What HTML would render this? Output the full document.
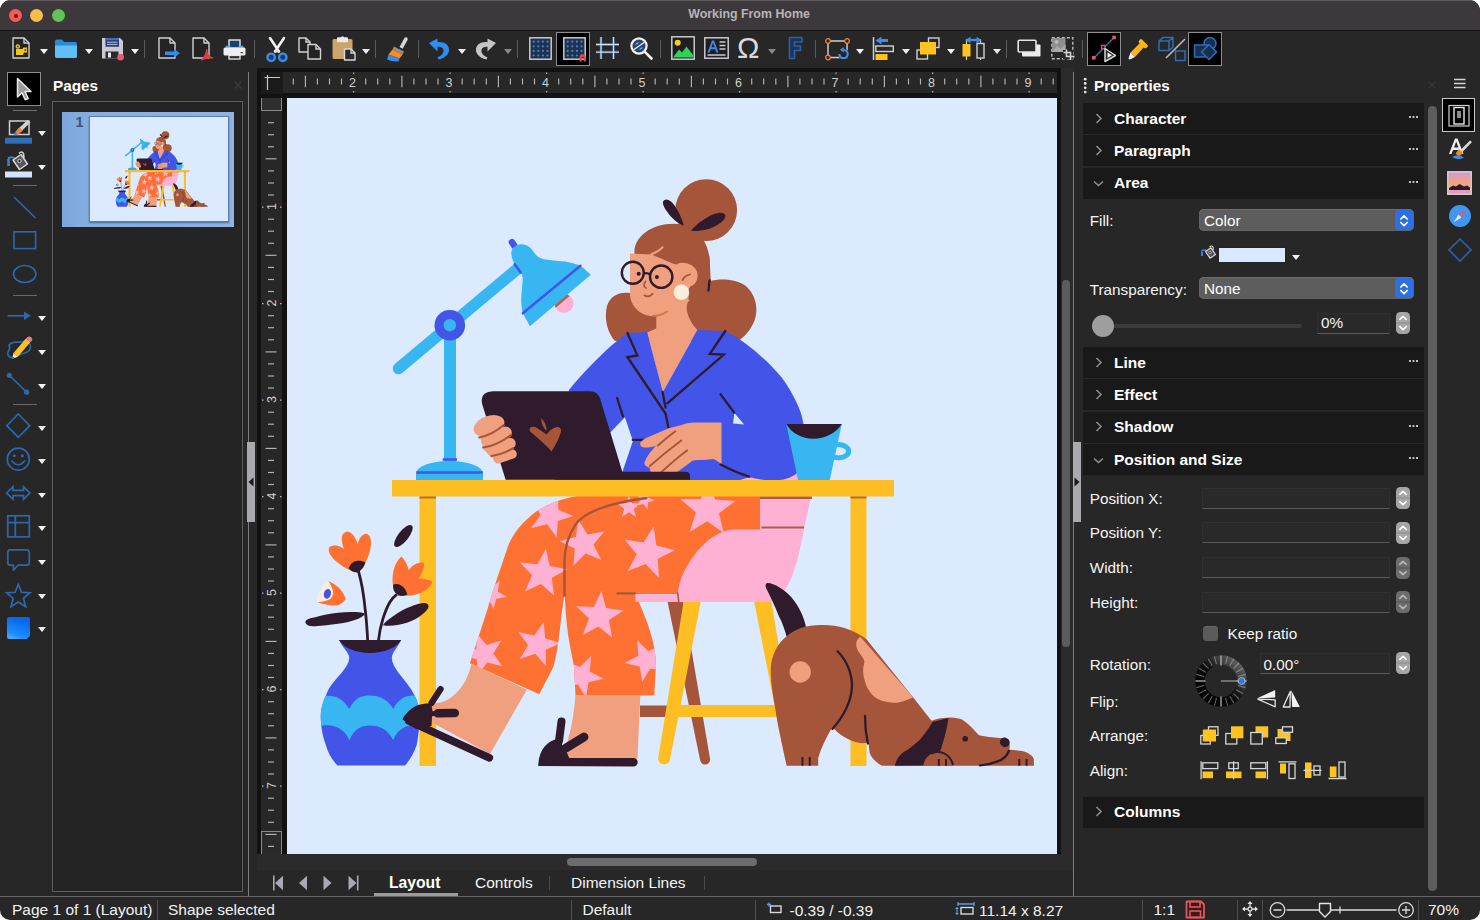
<!DOCTYPE html>
<html>
<head>
<meta charset="utf-8">
<title>Working From Home</title>
<style>
*{box-sizing:border-box;margin:0;padding:0}
html,body{width:1480px;height:920px;overflow:hidden;background:#fff;font-family:"Liberation Sans",sans-serif}
body{font-family:"Liberation Sans",sans-serif;color:#fff;position:relative}
.abs{position:absolute}
#win{position:absolute;left:0;top:0;width:1480px;height:920px;background:#272727;border-radius:11px 11px 10px 10px;overflow:hidden}
#titlebar{position:absolute;left:0;top:0;width:1480px;height:30.5px;background:#3d383b;border-bottom:1.5px solid #141114;box-shadow:0 1px 0 rgba(255,255,255,.17) inset}
#title{position:absolute;left:0;width:1498px;top:7px;text-align:center;font-weight:bold;font-size:12.4px;color:#b9b4b6}
.tl{position:absolute;top:9px;width:13px;height:13px;border-radius:50%}
.sep{position:absolute;width:1px;background:#5b5b5b}
.hsep{position:absolute;height:1px;background:#6a6a6a}
.dd{position:absolute;width:0;height:0;border-left:4px solid transparent;border-right:4px solid transparent;border-top:5px solid #f2f2f2}
.dd.dim{border-top-color:#8a8a8a}
.ic{position:absolute;overflow:visible}
.selbox{position:absolute;background:#000;border:1px solid #8d8d8d}
.lbl{position:absolute;font-size:15.3px;color:#f4f4f4;white-space:nowrap}
.hd{position:absolute;left:1083px;width:341px;height:31px;background:#191919}
.hd b{position:absolute;left:31px;top:6.5px;font-size:15.5px;color:#fff;white-space:nowrap}
.hd i{position:absolute;left:326px;top:13px;width:9px;height:3px;font-style:normal}
.hd i:before{content:"";position:absolute;left:0;top:0;width:2px;height:2px;background:#bdbdbd;box-shadow:3.5px 0 0 #bdbdbd,7px 0 0 #bdbdbd}
.chev{position:absolute;left:11px;top:10px;width:8px;height:10px}
.sel{position:absolute;left:1199px;width:215px;height:22px;border-radius:5px;background:#5d5d5d;box-shadow:0 0 0 .5px #6d6d6d inset,0 1px 0 rgba(255,255,255,.12) inset;font-size:15.3px;color:#fff;padding:3px 0 0 5px;overflow:hidden}
.sel:after{content:"";position:absolute;right:1px;top:1px;width:18px;height:20px;border-radius:4px;background:#2f6fe4}
.fld{position:absolute;height:21px;background:#292929;border:1px solid #303030;border-bottom-color:#5a5a5a}
.stp{position:absolute;left:1396px;width:14px;height:22px;border-radius:4px;background:#9a9a9a}
.stp.dim{background:#6e6e6e}
.st{position:absolute;top:901px;font-size:15.5px;color:#f2f2f2;white-space:nowrap}
</style>
</head>
<body>
<div id="win">

<!-- ===== TITLE BAR ===== -->
<div id="titlebar">
  <div class="tl" style="left:9px;background:#ee5f58"><div class="abs" style="left:4.5px;top:4.5px;width:4px;height:4px;border-radius:50%;background:#7a1410"></div></div>
  <div class="tl" style="left:30px;background:#f6be4f"></div>
  <div class="tl" style="left:52px;background:#5fc454"></div>
  <div id="title">Working From Home</div>
</div>

<!-- TOOLBAR -->
<div id="toolbar"><!--TB--><svg class="ic" style="left:12px;top:37px" width="18" height="22" viewBox="0 0 18 22" ><path d="M1 1H12L17 6V21H1Z" fill="#232323" stroke="#d2d2d2" stroke-width="1.4" stroke-linejoin="round"/><path d="M12 1V6H17" fill="none" stroke="#d2d2d2" stroke-width="1.4" stroke-linejoin="round"/><path d="M3.5 9.5a2.3 2.3 0 1 1 4.6 0a2.3 2.3 0 1 1-4.6 0zM4 12h6.5l1-1.5h3.5v5h-3l-1 2.5H4z" fill="#f2c71c"/><circle cx="5.8" cy="9.5" r="1" fill="#5a4a00"/><circle cx="13.3" cy="13" r="1" fill="#5a4a00"/></svg>
<div class="dd" style="left:39.6px;top:49px"></div>
<svg class="ic" style="left:54px;top:38px" width="24" height="21" viewBox="0 0 24 21" ><path d="M1 3.5Q1 1.5 3 1.5H8L10 4H21Q23 4 23 6V18Q23 20 21 20H3Q1 20 1 18Z" fill="#2b8bd3"/><path d="M1 7.5H23V18Q23 20 21 20H3Q1 20 1 18Z" fill="#62bef8"/></svg>
<div class="dd" style="left:85.2px;top:49px"></div>
<svg class="ic" style="left:101px;top:37px" width="23" height="23" viewBox="0 0 23 23" ><path d="M1 1H19L22 4V21.5H1Z" fill="#c9c9cf"/><rect x="4.5" y="1" width="13.5" height="8.7" fill="#1f3d7a"/><rect x="4.5" y="1" width="13.5" height="2.2" fill="#3e6fc0"/><path d="M6 5.2h10.5M6 7.4h10.5" stroke="#c9c9cf" stroke-width="1"/><rect x="4.5" y="14.5" width="13" height="7" fill="#2a2a2e"/><rect x="7" y="15.5" width="3" height="5" fill="#e8e8ea"/><circle cx="19.6" cy="20.3" r="3.3" fill="#f0577a"/></svg>
<div class="dd" style="left:130.8px;top:49px"></div>
<div class="sep" style="left:144px;top:40px;height:18px"></div>
<svg class="ic" style="left:158px;top:37px" width="24" height="23" viewBox="0 0 24 23" ><path d="M1 1H12L17 6V21H1Z" fill="#232323" stroke="#d2d2d2" stroke-width="1.4" stroke-linejoin="round"/><path d="M12 1V6H17" fill="none" stroke="#d2d2d2" stroke-width="1.4" stroke-linejoin="round"/><path d="M7 16.3H17.5" stroke="#2f8ff0" stroke-width="3.4"/><path d="M16 11.8L21.8 16.3L16 20.8Z" fill="#2f8ff0"/></svg>
<svg class="ic" style="left:192px;top:37px" width="24" height="24" viewBox="0 0 24 24" ><path d="M1 1H12L17 6V21H1Z" fill="#232323" stroke="#d2d2d2" stroke-width="1.4" stroke-linejoin="round"/><path d="M12 1V6H17" fill="none" stroke="#d2d2d2" stroke-width="1.4" stroke-linejoin="round"/><path d="M9.5 22.3c2.3-2 4-5.5 4.4-9.3c.150-1.4 1.5-1.4 1.5 0c.100 3.5 2 6.5 5.5 7.3c1 .25.7 1.3-.250 1.25c-3.5-.250-7.5.400-10.5 1.9c-.900.45-1.35-.500-.650-1.15z" fill="#d8413d"/></svg>
<svg class="ic" style="left:223px;top:39px" width="23" height="21" viewBox="0 0 23 21" ><rect x="6" y="1" width="11" height="8" fill="#1c3f6b" stroke="#e8e8ec" stroke-width="1.4"/><path d="M2.5 7.5Q2.5 6.2 4 6.8Q11.5 9.5 19 6.8Q20.5 6.2 20.5 7.5V9H2.5Z" fill="#4f97e0"/><rect x=".5" y="8.5" width="22" height="8" rx="1.5" fill="#eeeef2"/><rect x="6" y="16.5" width="11" height="3.5" fill="#2a2a2a" stroke="#e8e8ec" stroke-width="1.3"/><rect x="17.5" y="13" width="2.5" height="1.3" fill="#555"/></svg>
<div class="sep" style="left:254px;top:40px;height:18px"></div>
<svg class="ic" style="left:265px;top:36px" width="24" height="27" viewBox="0 0 24 27" ><path d="M5 2L14 15.5M19 2L10 15.5" stroke="#f4f4f4" stroke-width="2.6" stroke-linecap="round"/><rect x="10" y="13.5" width="4" height="3" fill="#e0e0e0"/><circle cx="6.2" cy="21.3" r="3.7" fill="#123a78" stroke="#3f8be0" stroke-width="2.4"/><circle cx="17.8" cy="21.3" r="3.7" fill="#123a78" stroke="#3f8be0" stroke-width="2.4"/></svg>
<svg class="ic" style="left:298px;top:37px" width="24" height="23" viewBox="0 0 24 23" ><path d="M1 1H8L12 5V15H1Z" fill="#232323" stroke="#d2d2d2" stroke-width="1.4" stroke-linejoin="round"/><path d="M8 1V5H12" fill="none" stroke="#d2d2d2" stroke-width="1.4"/><path d="M10 7.5H18L22.5 12V22H10Z" fill="#232323" stroke="#d2d2d2" stroke-width="1.4" stroke-linejoin="round"/><path d="M18 7.5V12H22.5" fill="none" stroke="#d2d2d2" stroke-width="1.4"/></svg>
<svg class="ic" style="left:332px;top:36px" width="24" height="25" viewBox="0 0 24 25" ><rect x=".5" y="3" width="20" height="20" rx="1.5" fill="#c9a46b"/><rect x="5" y="1.2" width="11" height="5" rx="1" fill="#efe9df"/><circle cx="10.5" cy="1.8" r="1.6" fill="#efe9df"/><path d="M12.5 13H19L23 17V24H12.5Z" fill="#2a2a2e" stroke="#d9d9d9" stroke-width="1.4" stroke-linejoin="round"/><path d="M19 13V17H23" fill="none" stroke="#d9d9d9" stroke-width="1.3"/></svg>
<div class="dd" style="left:361.7px;top:49px"></div>
<div class="sep" style="left:375px;top:40px;height:18px"></div>
<svg class="ic" style="left:385px;top:35px" width="24" height="27" viewBox="0 0 24 27" ><path d="M14.5 12L19.3 3.2Q20.3 1.5 22 2.5Q23.3 3.5 22.5 5L17.7 13.8Z" fill="#d5d5d8"/><path d="M9 11.5L19 16.5L17.5 19.5L7.5 14.5Z" fill="#8d8d92"/><path d="M7.5 14.5L17.5 19.5L14.5 23.5L3.5 19.5Z" fill="#ff8c1a"/><path d="M3.5 19.5L14.5 23.5L13.5 26.5Q7 27 2 24.5Z" fill="#3d87e6"/></svg>
<div class="sep" style="left:418px;top:40px;height:18px"></div>
<svg class="ic" style="left:428px;top:36px" width="23" height="25" viewBox="0 0 23 25" ><path d="M1 7L9.5 2.5V6.2C16 5.5 21.5 9 21 14.5C20.5 19 16 22.5 10.5 23.5L9.5 21.5C13.5 20 16 17 15.5 14C15 11.5 12.5 10.5 9.5 10.8V15.5Z" fill="#2f8ff0"/></svg>
<div class="dd" style="left:458px;top:49px"></div>
<svg class="ic" style="left:474px;top:36px" width="23" height="25" viewBox="0 0 23 25" ><path d="M22 7L13.5 2.5V6.2C7 5.5 1.5 9 2 14.5C2.5 19 7 22.5 12.5 23.5L13.5 21.5C9.5 20 7 17 7.5 14C8 11.5 10.5 10.5 13.5 10.8V15.5Z" fill="#c6c6c8"/></svg>
<div class="dd dim" style="left:503.6px;top:49px"></div>
<div class="sep" style="left:517px;top:40px;height:18px"></div>
<svg class="ic" style="left:529px;top:36.5px" width="24" height="25" viewBox="0 0 24 25" ><rect x=".8" y=".8" width="21.4" height="21.4" fill="#1e3350" stroke="#c9c9cf" stroke-width="1.5"/><circle cx="4.7" cy="4.7" r="1.1" fill="#4f7fc0"/><circle cx="4.7" cy="9.3" r="1.1" fill="#4f7fc0"/><circle cx="4.7" cy="13.9" r="1.1" fill="#4f7fc0"/><circle cx="4.7" cy="18.5" r="1.1" fill="#4f7fc0"/><circle cx="9.3" cy="4.7" r="1.1" fill="#4f7fc0"/><circle cx="9.3" cy="9.3" r="1.1" fill="#4f7fc0"/><circle cx="9.3" cy="13.9" r="1.1" fill="#4f7fc0"/><circle cx="9.3" cy="18.5" r="1.1" fill="#4f7fc0"/><circle cx="13.9" cy="4.7" r="1.1" fill="#4f7fc0"/><circle cx="13.9" cy="9.3" r="1.1" fill="#4f7fc0"/><circle cx="13.9" cy="13.9" r="1.1" fill="#4f7fc0"/><circle cx="13.9" cy="18.5" r="1.1" fill="#4f7fc0"/><circle cx="18.5" cy="4.7" r="1.1" fill="#4f7fc0"/><circle cx="18.5" cy="9.3" r="1.1" fill="#4f7fc0"/><circle cx="18.5" cy="13.9" r="1.1" fill="#4f7fc0"/><circle cx="18.5" cy="18.5" r="1.1" fill="#4f7fc0"/></svg>
<div class="selbox" style="left:556px;top:32px;width:34px;height:34px"></div>
<svg class="ic" style="left:562.5px;top:36.5px" width="24" height="25" viewBox="0 0 24 25" ><rect x=".8" y=".8" width="21.4" height="21.4" fill="#1e3350" stroke="#c9c9cf" stroke-width="1.5"/><circle cx="4.7" cy="4.7" r="1.1" fill="#4f7fc0"/><circle cx="4.7" cy="9.3" r="1.1" fill="#4f7fc0"/><circle cx="4.7" cy="13.9" r="1.1" fill="#4f7fc0"/><circle cx="4.7" cy="18.5" r="1.1" fill="#4f7fc0"/><circle cx="9.3" cy="4.7" r="1.1" fill="#4f7fc0"/><circle cx="9.3" cy="9.3" r="1.1" fill="#4f7fc0"/><circle cx="9.3" cy="13.9" r="1.1" fill="#4f7fc0"/><circle cx="9.3" cy="18.5" r="1.1" fill="#4f7fc0"/><circle cx="13.9" cy="4.7" r="1.1" fill="#4f7fc0"/><circle cx="13.9" cy="9.3" r="1.1" fill="#4f7fc0"/><circle cx="13.9" cy="13.9" r="1.1" fill="#4f7fc0"/><circle cx="13.9" cy="18.5" r="1.1" fill="#4f7fc0"/><circle cx="18.5" cy="4.7" r="1.1" fill="#4f7fc0"/><circle cx="18.5" cy="9.3" r="1.1" fill="#4f7fc0"/><circle cx="18.5" cy="13.9" r="1.1" fill="#4f7fc0"/><circle cx="18.5" cy="18.5" r="1.1" fill="#4f7fc0"/><path d="M16.5 24.5V20.5a3.2 3.2 0 0 1 6.4 0V24.5H20.7V20.7a1 1 0 0 0-2 0V24.5Z" fill="#e5484d"/></svg>
<svg class="ic" style="left:595px;top:36px" width="25" height="24" viewBox="0 0 25 24" ><path d="M6 1V23M18.5 1V23M1 8.5H24M1 16.2H24" stroke="#2b5d94" stroke-width="3.2" opacity=".55"/><path d="M6 1V23M18.5 1V23M1 8.5H24M1 16.2H24" stroke="#cfe0f2" stroke-width="1.3"/></svg>
<svg class="ic" style="left:629px;top:36px" width="25" height="25" viewBox="0 0 25 25" ><circle cx="10" cy="10" r="7.6" fill="#28466e" stroke="#f2f2f2" stroke-width="2.2"/><path d="M5 13.5L15 6.5" stroke="#dfe8f3" stroke-width="1.5"/><path d="M6.5 8.5l3-2M10.5 13.5l3-2" stroke="#7fa6d6" stroke-width="1.3"/><path d="M15.8 15.8L22.5 22.5" stroke="#f2f2f2" stroke-width="2.6" stroke-linecap="round"/></svg>
<div class="sep" style="left:660px;top:40px;height:18px"></div>
<svg class="ic" style="left:671px;top:36px" width="24" height="24" viewBox="0 0 24 24" ><rect x=".8" y=".8" width="22.4" height="22.4" fill="#1f1f1f" stroke="#c9c9cf" stroke-width="1.5"/><circle cx="6.7" cy="6.8" r="3" fill="#fdc92a"/><path d="M2 21.5L8 13.5L11 16.5L15.5 10.5L22 19V21.5Z" fill="#2fd158"/></svg>
<svg class="ic" style="left:704px;top:37px" width="25" height="22" viewBox="0 0 25 22" ><rect x=".8" y=".8" width="23.4" height="20.4" fill="#1f1f1f" stroke="#c9c9cf" stroke-width="1.5"/><path d="M3.5 15.5L8 3.5H10L14.5 15.5H12.3L11.2 12.3H6.8L5.7 15.5ZM7.5 10.3H10.5L9 5.8Z" fill="#3f8be8"/><path d="M15.5 5H21.5M15.5 8.5H21.5M15.5 12H21.5M3.5 18H21.5" stroke="#c9c9cf" stroke-width="1.3"/></svg>
<div class="abs" style="left:737px;top:30.5px;font-size:30px;line-height:34px;color:#dadada">&#937;</div>
<div class="dd dim" style="left:768px;top:49px"></div>
<svg class="ic" style="left:788px;top:36px" width="16" height="24" viewBox="0 0 16 24" ><path d="M1.5 1.5H14V6H6.5V10H12.5V14.5H6.5V22.5H1.5Z" fill="#1c3557" stroke="#2f62a3" stroke-width="1.6" stroke-linejoin="round"/></svg>
<div class="sep" style="left:815px;top:40px;height:18px"></div>
<svg class="ic" style="left:824px;top:37px" width="26" height="24" viewBox="0 0 26 24" ><rect x="4" y="4" width="19" height="16.5" fill="none" stroke="#cfcfcf" stroke-width="1.5"/><circle cx="4" cy="4" r="2.3" fill="#3a2418" stroke="#e8833a" stroke-width="1.3"/><circle cx="23" cy="4" r="2.3" fill="#3a2418" stroke="#e8833a" stroke-width="1.3"/><circle cx="4" cy="20.5" r="2.3" fill="#3a2418" stroke="#e8833a" stroke-width="1.3"/><circle cx="19.5" cy="17" r="5.5" fill="#262626"/><path d="M15.3 17a4.2 4.2 0 1 0 4.2-4.2" fill="none" stroke="#3f8be8" stroke-width="2.2"/><path d="M19.8 10L15.8 12.8L19.8 15.6Z" fill="#3f8be8"/></svg>
<div class="dd" style="left:856.2px;top:49px"></div>
<svg class="ic" style="left:872px;top:36px" width="23" height="25" viewBox="0 0 23 25" ><path d="M1.5 1V24" stroke="#d0d0d0" stroke-width="1.5"/><path d="M8 4.5H16" stroke="#3f8be8" stroke-width="3"/><path d="M9.5 .5L3.5 4.5L9.5 8.5Z" fill="#3f8be8"/><rect x="3.8" y="10" width="17.5" height="5.5" fill="#2a2a2a" stroke="#d0d0d0" stroke-width="1.4"/><rect x="3.5" y="18" width="12" height="6" fill="#fdc41f"/></svg>
<div class="dd" style="left:901.6px;top:49px"></div>
<svg class="ic" style="left:916px;top:37px" width="24" height="23" viewBox="0 0 24 23" ><rect x="12.5" y="1" width="10.5" height="9.5" fill="none" stroke="#d0d0d0" stroke-width="1.4"/><rect x="1" y="13" width="10.5" height="9" fill="none" stroke="#d0d0d0" stroke-width="1.4"/><rect x="4" y="5" width="16" height="12.5" fill="#fdc41f"/></svg>
<div class="dd" style="left:947px;top:49px"></div>
<svg class="ic" style="left:961px;top:36px" width="25" height="25" viewBox="0 0 25 25" ><path d="M5.5 3V24M19.5 3V24" stroke="#d0d0d0" stroke-width="1.2"/><path d="M8 4H17" stroke="#3f8be8" stroke-width="2.4"/><path d="M9.5 .8L4.5 4L9.5 7.2ZM15.5 .8L20.5 4L15.5 7.2Z" fill="#3f8be8"/><rect x="1.5" y="8" width="8" height="12.5" fill="#fdc41f"/><rect x="16" y="7.5" width="7" height="14.5" fill="#2a2a2a" stroke="#d0d0d0" stroke-width="1.4"/></svg>
<div class="dd" style="left:992.7px;top:49px"></div>
<div class="sep" style="left:1006px;top:40px;height:18px"></div>
<svg class="ic" style="left:1017px;top:39px" width="25" height="19" viewBox="0 0 25 19" ><rect x="5" y="5.5" width="18.5" height="12" rx="1" fill="#ececec"/><rect x="1.2" y="1.2" width="17.8" height="11.8" rx="1" fill="#2b2b2b" stroke="#e4e4e4" stroke-width="1.6"/></svg>
<svg class="ic" style="left:1051px;top:37px" width="24" height="24" viewBox="0 0 24 24" ><rect x=".8" y=".8" width="21" height="21" fill="none" stroke="#bdbdbd" stroke-width="1.4" stroke-dasharray="3 2"/><rect x="1" y="1" width="13.5" height="14" fill="#8e8e8e"/><circle cx="5.5" cy="5" r="2" fill="#b8b8b8"/><path d="M1 15L6 9L9.5 12L14.5 7.5V15Z" fill="#a9a9a9"/><rect x="12" y="13" width="10" height="9" fill="#262626"/><path d="M15.5 12.5V19.5H23.5M12.5 15.5H19.5V23" fill="none" stroke="#d6d6d6" stroke-width="1.6"/></svg>
<div class="sep" style="left:1082px;top:40px;height:18px"></div>
<div class="selbox" style="left:1087px;top:32px;width:34px;height:34px"></div>
<svg class="ic" style="left:1090px;top:34px" width="30" height="30" viewBox="0 0 30 30" ><path d="M4 24L24 3.5" stroke="#3a6fb0" stroke-width="1.4"/><rect x="2" y="22" width="3.6" height="3.6" fill="#e0566f"/><rect x="22.3" y="1.7" width="3.6" height="3.6" fill="#e0566f"/><rect x="11.5" y="11.3" width="3.4" height="3.4" fill="#2a1418" stroke="#e0566f" stroke-width="1.2"/><path d="M15 14.5V27.5L25.5 21.5Z" fill="#2b2b2b" stroke="#d8d8d8" stroke-width="1.5" stroke-linejoin="round"/><path d="M17.5 18.5V24L22 21.3Z" fill="#f4f4f4"/></svg>
<svg class="ic" style="left:1127px;top:38px" width="22" height="22" viewBox="0 0 22 22" ><path d="M13 1.5Q14 .5 15 1.5L20.5 7Q21.5 8 20.5 9L18.5 10.5L16.5 9.5L8 19L3.5 14.5L12.5 5.5L11.5 3.5Z" fill="#fdb515"/><path d="M3.5 14.5L8 19L4 21Q2 22 1.5 20.5Z" fill="#f0f0f0"/></svg>
<svg class="ic" style="left:1157px;top:35px" width="30" height="27" viewBox="0 0 30 27" ><path d="M2 6L6 2.5H16V12L12 15.5H2ZM2 6H12V15.5M12 6L16 2.5" fill="none" stroke="#2f6db8" stroke-width="1.5" stroke-linejoin="round"/><path d="M9 23L28 4" stroke="#bdbdbd" stroke-width="1.6"/><rect x="18.5" y="16" width="9.5" height="9.5" fill="none" stroke="#2f6db8" stroke-width="1.5"/></svg>
<div class="selbox" style="left:1188px;top:32px;width:34px;height:34px"></div>
<svg class="ic" style="left:1192px;top:35px" width="28" height="28" viewBox="0 0 28 28" ><circle cx="18" cy="8.5" r="6" fill="#17304f" stroke="#2f6db8" stroke-width="1.5"/><rect x="2.5" y="10" width="13" height="12" fill="#17304f" stroke="#2f6db8" stroke-width="1.5"/><path d="M17 9.5L24.5 17L17 24.5L9.5 17Z" fill="#17304f" stroke="#2f6db8" stroke-width="1.5"/></svg><!--/TB--></div>

<!-- LEFT TOOLBOX -->
<div id="toolbox"><!--TX--><div class="selbox" style="left:7px;top:72px;width:34px;height:34px"></div>
<svg class="ic" style="left:14px;top:77px" width="20" height="24" viewBox="0 0 20 24"><path d="M3.5 1.5L17 14.5H11L14.2 21.5L11.2 22.8L8 15.8L3.5 20Z" fill="#9a9a9a" stroke="#e9e9e9" stroke-width="1.5" stroke-linejoin="round"/></svg>
<div class="hsep" style="left:12.5px;top:109.5px;width:24.5px"></div>
<svg class="ic" style="left:5px;top:119px" width="28" height="26" viewBox="0 0 28 26"><rect x="4.5" y="2" width="19.5" height="13.5" fill="#262626" stroke="#cfcfcf" stroke-width="1.5"/><path d="M22.5 1L25.5 3.5L15 13.5L12 11Z" fill="#cfcfd4"/><path d="M14.5 8.5L18 11.5L13 15.5L10 13Z" fill="#e8873a"/><path d="M10 13L13 15.5L8.5 16.5Z" fill="#3f8be8"/><rect x="0" y="18.7" width="27" height="6" fill="#2f6db8"/></svg>
<div class="dd" style="left:37.5px;top:130.9px"></div>
<svg class="ic" style="left:5px;top:151px" width="28" height="28" viewBox="0 0 28 28"><path d="M3.5 8V15" stroke="#3f7fd0" stroke-width="2.6"/><path d="M3 7.5Q7 5 10 7.5" stroke="#3f7fd0" stroke-width="2.2" fill="none"/><path d="M8 9L16 3.5L22.5 13L14.5 18.5Z" fill="#56565c" stroke="#d4d4d8" stroke-width="1.5" stroke-linejoin="round"/><path d="M14 2.5Q16.5 -.5 18.5 2.5L19 7" fill="none" stroke="#d4d4d8" stroke-width="1.5"/><circle cx="14.5" cy="10" r="1.7" fill="#262626" stroke="#d4d4d8" stroke-width="1"/><rect x="0" y="20.5" width="27" height="6" fill="#d4e3fa"/></svg>
<div class="dd" style="left:37.5px;top:164.7px"></div>
<div class="hsep" style="left:12.5px;top:185px;width:24.5px"></div>
<svg class="ic" style="left:12px;top:195px" width="26" height="26" viewBox="0 0 26 26"><path d="M2 2L23.6 23" stroke="#2d67ae" stroke-width="1.6"/></svg>
<svg class="ic" style="left:12px;top:230px" width="26" height="21" viewBox="0 0 26 21"><rect x="2" y="1.8" width="21.6" height="16.8" fill="none" stroke="#2d67ae" stroke-width="1.6"/></svg>
<svg class="ic" style="left:12px;top:263px" width="26" height="22" viewBox="0 0 26 22"><ellipse cx="12.7" cy="11" rx="11.2" ry="8.5" fill="none" stroke="#2d67ae" stroke-width="1.6"/></svg>
<div class="hsep" style="left:12.5px;top:294.5px;width:24.5px"></div>
<svg class="ic" style="left:6px;top:308px" width="27" height="16" viewBox="0 0 27 16"><path d="M1.5 7.8H20" stroke="#2d67ae" stroke-width="1.7"/><path d="M18 3.5L25 7.8L18 12.1Z" fill="#2d67ae"/></svg>
<div class="dd" style="left:37.5px;top:316.4px"></div>
<svg class="ic" style="left:5px;top:336px" width="30" height="28" viewBox="0 0 30 28"><path d="M4 9C8 4 13 7 16 6C22 4 27 8 25 13C24 17 18 17 14 19C10 22 5 23 3 19C1 15 7 14 4 9Z" fill="none" stroke="#2d67ae" stroke-width="1.7"/><path d="M21 2.5L25.5 6L13 20.5L8.5 17Z" fill="#f8c425"/><path d="M21 2.5L23 .8Q24.5 0 25.8 1L26.8 2Q27.8 3.2 27 4.5L25.5 6Z" fill="#f07a8c"/><path d="M8.5 17L13 20.5L7 23Z" fill="#f1e5cf"/><path d="M7.8 20.8L9.4 22L7 23Z" fill="#333"/></svg>
<div class="dd" style="left:37.5px;top:349.9px"></div>
<svg class="ic" style="left:5px;top:371px" width="26" height="25" viewBox="0 0 26 25"><path d="M4.5 4.5L21.5 21" stroke="#2d67ae" stroke-width="1.7"/><circle cx="4.3" cy="4.3" r="2.6" fill="#2d67ae"/><circle cx="21.7" cy="21.2" r="2.6" fill="#2d67ae"/></svg>
<div class="dd" style="left:37.5px;top:383.8px"></div>
<div class="hsep" style="left:12.5px;top:404px;width:24.5px"></div>
<svg class="ic" style="left:5px;top:412px" width="27" height="27" viewBox="0 0 27 27"><path d="M13.3 2L24.8 13.7L13.3 25.3L1.8 13.7Z" fill="none" stroke="#2d67ae" stroke-width="1.7" stroke-linejoin="miter"/></svg>
<div class="dd" style="left:37.5px;top:425.7px"></div>
<svg class="ic" style="left:5px;top:446px" width="27" height="27" viewBox="0 0 27 27"><circle cx="13.3" cy="13.2" r="11" fill="none" stroke="#2d67ae" stroke-width="1.7"/><circle cx="9.3" cy="9.8" r="1.5" fill="#2d67ae"/><circle cx="17.3" cy="9.8" r="1.5" fill="#2d67ae"/><path d="M6.5 14.5Q13.3 23 20 14.5" fill="none" stroke="#2d67ae" stroke-width="1.7"/></svg>
<div class="dd" style="left:37.5px;top:459.3px"></div>
<svg class="ic" style="left:5px;top:484px" width="27" height="18" viewBox="0 0 27 18"><path d="M1.5 9L8 2.8V6.3H18.5V2.8L25 9L18.5 15.2V11.7H8V15.2Z" fill="none" stroke="#2d67ae" stroke-width="1.7" stroke-linejoin="miter"/></svg>
<div class="dd" style="left:37.5px;top:493.1px"></div>
<svg class="ic" style="left:6px;top:514px" width="26" height="25" viewBox="0 0 26 25"><rect x="1.8" y="1.8" width="21.5" height="21" fill="none" stroke="#2d67ae" stroke-width="1.7"/><path d="M9.3 1.8V22.8M1.8 8.6H23.3" stroke="#2d67ae" stroke-width="1.7"/></svg>
<div class="dd" style="left:37.5px;top:526.2px"></div>
<svg class="ic" style="left:6px;top:548px" width="26" height="25" viewBox="0 0 26 25"><path d="M4 1.8H20.5Q23.3 1.8 23.3 4.5V14.5Q23.3 17.2 20.5 17.2H12L7.5 22.2V17.2H4Q1.8 17.2 1.8 14.5V4.5Q1.8 1.8 4 1.8Z" fill="none" stroke="#2d67ae" stroke-width="1.7" stroke-linejoin="round"/></svg>
<div class="dd" style="left:37.5px;top:560.1px"></div>
<svg class="ic" style="left:5px;top:582px" width="27" height="27" viewBox="0 0 27 27"><path d="M13.3 2.2L16.5 10.3L25 10.8L18.4 16.3L20.6 24.7L13.3 20L6 24.7L8.2 16.3L1.6 10.8L10.1 10.3Z" fill="none" stroke="#2d67ae" stroke-width="1.7" stroke-linejoin="miter"/></svg>
<div class="dd" style="left:37.5px;top:593.5px"></div>
<div class="abs" style="left:7px;top:616.5px;width:23px;height:22.5px;border-radius:2.5px;background:linear-gradient(200deg,#0766ea 20%,#1f8dff 75%,#58b4ff 100%);clip-path:polygon(0 0,100% 0,100% 86%,86% 100%,0 100%)"></div>
<div class="dd" style="left:37.5px;top:627.1px"></div><!--/TX--></div>

<!-- PAGES PANEL -->
<div id="pages"><!--PG--><div class="abs" style="left:53px;top:77px;font-size:15.3px;font-weight:bold;color:#fff">Pages</div>
<svg class="ic" style="left:233px;top:80px" width="10" height="10"><path d="M1.5 1.5L8.5 8.5M8.5 1.5L1.5 8.5" stroke="#3c3c3c" stroke-width="1.3"/></svg>
<div class="abs" style="left:52px;top:101px;width:190.5px;height:791px;border:1px solid #5e5e5e;background:#242424"></div>
<div class="abs" style="left:62px;top:111.5px;width:171.5px;height:115.5px;background:linear-gradient(90deg,#7ca7dc 0,#86aee0 16%,#8db4e2 100%)"></div>
<div class="abs" style="left:89px;top:116px;width:140px;height:106px;background:#dbeafe;border:1px solid #607fa8;box-shadow:0 1px 1.5px rgba(40,60,90,.6)"></div>
<div class="abs" style="left:75.5px;top:114px;font-size:14.5px;font-weight:bold;color:#3d5676">1</div>
<svg class="abs" style="left:90px;top:117px" width="138" height="104" viewBox="90 117 138 104"><use href="#art" transform="translate(74.4,108.2) scale(.1288)"/></svg><!--/PG--></div>

<!-- WORKSPACE -->
<div id="work"><!--WK--><div class="abs" style="left:257px;top:68px;width:804px;height:786px;background:#121212"></div>
<div class="abs" style="left:283px;top:72px;width:774px;height:21px;background:#272727"></div>
<div class="abs" style="left:261px;top:72px;width:22px;height:22px;background:#1b1b1b"></div>
<svg class="ic" style="left:261px;top:72px" width="22" height="22"><path d="M3.5 5.5H19 M6.5 3V18" stroke="#c9c9c9" stroke-width="1.2" fill="none"/></svg>
<div class="abs" style="left:261px;top:98px;width:21px;height:756px;background:#272727"></div>
<div class="abs" style="left:261px;top:98px;width:21px;height:13px;border:1px solid #8a8a8a;border-top:none;background:#2f2f2f"></div>
<div class="abs" style="left:261px;top:831px;width:21px;height:23px;border:1px solid #8a8a8a;border-bottom:none;background:#2a2a2a"></div>
<svg class="abs" style="left:0;top:0" width="1480" height="920" shape-rendering="auto"><g stroke="#b4b4b4" stroke-width="1.15" stroke-linecap="butt"><path d="M293.3 78.5v6"/><path d="M305.4 75.8v11.5"/><path d="M317.4 78.5v6"/><path d="M329.5 78.5v6"/><path d="M341.5 78.5v6"/><path d="M353.6 72.5v1.5M353.6 91v1.5" stroke-width="1.2"/><path d="M365.7 78.5v6"/><path d="M377.7 78.5v6"/><path d="M389.8 78.5v6"/><path d="M401.9 75.8v11.5"/><path d="M413.9 78.5v6"/><path d="M426.0 78.5v6"/><path d="M438.0 78.5v6"/><path d="M450.1 72.5v1.5M450.1 91v1.5" stroke-width="1.2"/><path d="M462.2 78.5v6"/><path d="M474.2 78.5v6"/><path d="M486.3 78.5v6"/><path d="M498.4 75.8v11.5"/><path d="M510.4 78.5v6"/><path d="M522.5 78.5v6"/><path d="M534.5 78.5v6"/><path d="M546.6 72.5v1.5M546.6 91v1.5" stroke-width="1.2"/><path d="M558.7 78.5v6"/><path d="M570.7 78.5v6"/><path d="M582.8 78.5v6"/><path d="M594.9 75.8v11.5"/><path d="M606.9 78.5v6"/><path d="M619.0 78.5v6"/><path d="M631.0 78.5v6"/><path d="M643.1 72.5v1.5M643.1 91v1.5" stroke-width="1.2"/><path d="M655.2 78.5v6"/><path d="M667.2 78.5v6"/><path d="M679.3 78.5v6"/><path d="M691.4 75.8v11.5"/><path d="M703.4 78.5v6"/><path d="M715.5 78.5v6"/><path d="M727.5 78.5v6"/><path d="M739.6 72.5v1.5M739.6 91v1.5" stroke-width="1.2"/><path d="M751.7 78.5v6"/><path d="M763.7 78.5v6"/><path d="M775.8 78.5v6"/><path d="M787.9 75.8v11.5"/><path d="M799.9 78.5v6"/><path d="M812.0 78.5v6"/><path d="M824.0 78.5v6"/><path d="M836.1 72.5v1.5M836.1 91v1.5" stroke-width="1.2"/><path d="M848.2 78.5v6"/><path d="M860.2 78.5v6"/><path d="M872.3 78.5v6"/><path d="M884.4 75.8v11.5"/><path d="M896.4 78.5v6"/><path d="M908.5 78.5v6"/><path d="M920.5 78.5v6"/><path d="M932.6 72.5v1.5M932.6 91v1.5" stroke-width="1.2"/><path d="M944.7 78.5v6"/><path d="M956.7 78.5v6"/><path d="M968.8 78.5v6"/><path d="M980.9 75.8v11.5"/><path d="M992.9 78.5v6"/><path d="M1005.0 78.5v6"/><path d="M1017.0 78.5v6"/><path d="M1029.1 72.5v1.5M1029.1 91v1.5" stroke-width="1.2"/><path d="M1041.2 78.5v6"/><path d="M1053.2 78.5v6"/><path d="M268 122.7h6"/><path d="M268 134.7h6"/><path d="M268 146.8h6"/><path d="M265.5 158.8h11"/><path d="M268 170.9h6"/><path d="M268 183.0h6"/><path d="M268 195.0h6"/><path d="M262 207.1h1.5M280 207.1h1.5" stroke-width="1.2"/><path d="M268 219.2h6"/><path d="M268 231.2h6"/><path d="M268 243.3h6"/><path d="M265.5 255.3h11"/><path d="M268 267.4h6"/><path d="M268 279.5h6"/><path d="M268 291.5h6"/><path d="M262 303.6h1.5M280 303.6h1.5" stroke-width="1.2"/><path d="M268 315.7h6"/><path d="M268 327.7h6"/><path d="M268 339.8h6"/><path d="M265.5 351.9h11"/><path d="M268 363.9h6"/><path d="M268 376.0h6"/><path d="M268 388.0h6"/><path d="M262 400.1h1.5M280 400.1h1.5" stroke-width="1.2"/><path d="M268 412.2h6"/><path d="M268 424.2h6"/><path d="M268 436.3h6"/><path d="M265.5 448.4h11"/><path d="M268 460.4h6"/><path d="M268 472.5h6"/><path d="M268 484.5h6"/><path d="M262 496.6h1.5M280 496.6h1.5" stroke-width="1.2"/><path d="M268 508.7h6"/><path d="M268 520.7h6"/><path d="M268 532.8h6"/><path d="M265.5 544.9h11"/><path d="M268 556.9h6"/><path d="M268 569.0h6"/><path d="M268 581.0h6"/><path d="M262 593.1h1.5M280 593.1h1.5" stroke-width="1.2"/><path d="M268 605.2h6"/><path d="M268 617.2h6"/><path d="M268 629.3h6"/><path d="M265.5 641.4h11"/><path d="M268 653.4h6"/><path d="M268 665.5h6"/><path d="M268 677.5h6"/><path d="M262 689.6h1.5M280 689.6h1.5" stroke-width="1.2"/><path d="M268 701.7h6"/><path d="M268 713.7h6"/><path d="M268 725.8h6"/><path d="M265.5 737.9h11"/><path d="M268 749.9h6"/><path d="M268 762.0h6"/><path d="M268 774.0h6"/><path d="M262 786.1h1.5M280 786.1h1.5" stroke-width="1.2"/><path d="M268 798.2h6"/><path d="M268 810.2h6"/><path d="M268 822.3h6"/><path d="M265.5 834.4h11"/><path d="M268 846.4h6"/></g><g fill="#cfcfcf" font-family="Liberation Sans" font-size="12.5" text-anchor="middle"><text x="352.5" y="87">2</text><text x="449.0" y="87">3</text><text x="545.5" y="87">4</text><text x="642.0" y="87">5</text><text x="738.5" y="87">6</text><text x="835.0" y="87">7</text><text x="931.5" y="87">8</text><text x="1028.0" y="87">9</text><text transform="translate(276,206.5) rotate(-90)" x="0" y="0">1</text><text transform="translate(276,303.0) rotate(-90)" x="0" y="0">2</text><text transform="translate(276,399.5) rotate(-90)" x="0" y="0">3</text><text transform="translate(276,496.0) rotate(-90)" x="0" y="0">4</text><text transform="translate(276,592.5) rotate(-90)" x="0" y="0">5</text><text transform="translate(276,689.0) rotate(-90)" x="0" y="0">6</text><text transform="translate(276,785.5) rotate(-90)" x="0" y="0">7</text></g></svg>
<div id="canvas" class="abs" style="left:287px;top:98px;width:770px;height:756px;background:#dbeafe;overflow:hidden"><!--ART--><svg class="abs" style="left:0;top:0" width="770" height="756" viewBox="287 98 770 756">
<g id="art">
<rect x="419.5" y="496" width="16.5" height="270" fill="#fdbe24"/>
<rect x="850.5" y="496" width="16" height="270" fill="#fdbe24"/>
<rect x="419.5" y="496" width="16.5" height="2.5" fill="#b4702f"/>
<rect x="850.5" y="496" width="16" height="2.5" fill="#b4702f"/>
<path d="M367.7 641C367.2 631 366.5 621 365.4 611.3C364.6 603 363.6 595.5 362.4 588.5C361.3 582.5 360 577 358.6 571.7M378.4 641C379.3 633 380.8 625.5 382.9 618.9C384.8 612.8 387 607 389.8 602.2C391.8 599 394 596.5 396.6 594.6" stroke="#2f1b2b" stroke-width="2.8" fill="none" stroke-linecap="round"/>
<path d="M306.1 623.8C303.500 620.5 308 618.3 315.2 617.2C322.500 615.3 330 613.8 338 612.8C346 611.900 354 611.900 360.9 612.5C363 612.7 364.500 613.300 364.700 614.400C362.800 616.300 360.500 617.700 357.800 618.900C352 621.200 345 622.800 338 623.800C330 625 322.500 625.800 315.200 626.200C311 626.500 307.800 626 306.100 623.800Z" fill="#2f1b2b"/>
<path d="M382.9 625.2C385 622 388 619.500 391.300 617.400C396 614 401 611 406.500 608.300C411.500 606 416.500 604.200 421.700 603.300C425.200 602.800 427.800 603.300 428.300 605.300C428.800 606.800 428.200 608.300 427.100 609.800C424 613.500 420 616.500 415.700 618.900C410 621.800 404 623.700 397.400 625C392.500 625.800 387.500 626 382.900 625.200Z" fill="#2f1b2b"/>
<ellipse cx="403.4" cy="536" rx="13.5" ry="5.1" transform="rotate(-51.7 403.4 536)" fill="#2f1b2b"/>
<path d="M328.9 547.4C331.500 545.500 335 545.200 338 545.900C340.300 546.500 342.300 547.600 344.100 548.900C342.300 545 341.500 540.500 341.900 536.700C342.500 533.800 344.500 531.900 347.200 531.400C350 531.900 352 533.300 353.300 535.200C355.300 537.800 356.800 540.900 357.800 544.300C358.300 541.400 359.300 538.800 360.900 536.700C362.500 534.800 364.500 533.700 367 533.700C369.300 535 370.400 537.200 370.800 539.800C371.300 543.300 371 547 370 550.400C369 554.800 367.400 558.900 365.400 562.600C363.500 566.500 360.800 569.700 357.800 571.700C355 571.800 352.500 571.200 350.200 570.200C346.300 568.800 342.800 566.800 339.600 564.100C335.800 561.500 332.700 558.500 330.400 555C329 552.600 328.500 550 328.900 547.400Z" fill="#ff7133"/>
<path d="M348.700 567.900C350.300 564.300 353 561.800 356.300 561.100C359.500 560.500 362.700 561 365.400 562.600C364.500 566.500 362 570 357.800 572.500C354.500 572.600 350.500 571 348.700 567.900Z" fill="#2f1b2b"/>
<path d="M401.200 556.500C403.500 558.500 405.300 561.200 406.500 564.100C407.500 566 408.300 568 408.800 570.200C410.500 567.600 412.800 565.500 415.700 564.100C418 563 420.600 562.500 423.300 562.600C424.300 564.500 424.300 566.600 423.300 568.700C422.300 572.300 420.700 575.700 418.700 578.600C421.200 578.300 423.800 578.600 426.300 579.400C428.600 579.800 430.700 580.500 432.400 581.600C431.700 584.300 430 586.600 427.800 588.500C424.400 591.400 420.200 593.400 415.700 594.600C412.700 595.500 409.600 595.900 406.500 595.800L398 596C395 593 393.300 588.700 392.800 583.900C392.300 579.300 392.600 574.600 393.600 570.200C394.800 565.300 397.500 560 401.200 556.500Z" fill="#ff7133"/>
<path d="M393.100 584.700C395.700 583.600 398.500 584 401.200 585.400C404.500 587.400 406.600 590.700 407.300 594.600C404.500 596.200 401.500 596.300 398.900 595.300C397 594.500 395.500 593.200 394.400 591.500C393.300 589.500 392.900 587.200 393.100 584.700Z" fill="#2f1b2b"/>
<path d="M328.200 580.900C325.500 582.500 323.800 584.700 322.800 587C320.500 590.800 318.200 594.800 316.700 599.100C316.700 600.300 317 601.300 317.500 602.200L332 603L334 590Z" fill="#fbeedd"/>
<path d="M328.200 580.900C332.500 582.500 336.400 585.200 339.600 588.500C342.500 591.600 344.700 595.200 345.700 599.100C344 602 341.200 604 338 605.200C334 605.800 329.800 605.400 325.900 604.500C322.800 604 320 603.300 317.500 602.200C322 602 326.800 601 330.400 599.100C333 596.500 333.600 593.200 332.700 590C331.800 586.700 330.200 583.600 328.200 580.900Z" fill="#ff7133"/>
<ellipse cx="327.4" cy="593.8" rx="3.500" ry="5" transform="rotate(15 327.4 593.8)" fill="#4355e9"/>
<clipPath id="vc"><path d="M339 640L401.2 640C398 647 392 652 391.8 658C392 668 404 678 410.9 689C417 699 420 707 419.7 715C419.5 726 418.5 736 416.7 745C414 753 410 760 405 765.5L337.5 765.5C332 760 328 753 325.8 745C322.5 736 320.5 726 320.8 715C321 707 324 699 328.7 689C335 678 349 668 349.3 658C349 652 342 647 339 640Z"/></clipPath>
<path d="M339 640L401.2 640C398 647 392 652 391.8 658C392 668 404 678 410.9 689C417 699 420 707 419.7 715C419.5 726 418.5 736 416.7 745C414 753 410 760 405 765.5L337.5 765.5C332 760 328 753 325.8 745C322.5 736 320.5 726 320.8 715C321 707 324 699 328.7 689C335 678 349 668 349.3 658C349 652 342 647 339 640Z" fill="#4355e9"/>
<g clip-path="url(#vc)"><path d="M316 700C322 694 340 692 349.3 709C355 697 362 695.4 369.8 695.4C378 695.4 387 698 393.3 709C400 694 416 692 424 700L424 728C418 724 400 722 393.3 740.2C387 728 378 725.6 369.8 725.6C362 725.6 355 728 349.3 740.2C342 722 322 724 316 728Z" fill="#37b6f1"/></g>
<path d="M339 640L401.2 640C396 648 384 653 369.8 653C356 653 344 648 339 640Z" fill="#2f1b2b"/>
<path d="M666.8 598L682.6 598L710 758.5A5 5 0 0 1 700.2 760.5Z" fill="#a5563a"/>
<rect x="640" y="705.5" width="40" height="11.5" fill="#a5563a"/>
<path d="M735 465H818L804 529.4H735Z" fill="#ffb1d3"/>
<path d="M758 497.6H812" stroke="#b05c40" stroke-width="2.8"/><path d="M761.5 527.5H804" stroke="#a5563a" stroke-width="2" opacity=".9"/>
<circle cx="706.2" cy="210.1" r="30.9" fill="#a5563a"/>
<path d="M634.5 254C633 238 650 223.8 674 223.8C694 223.8 706 237 709.3 256C710.6 266 710 274 709.3 281C720 278.5 737 278 747 287C757 297 759 312 753 324C749 332 744 337 738 341L615 341C607 332 604 318 607 306C610 296 619 291.5 630 293Z" fill="#a5563a"/>
<path d="M664.2 200.2C667.5 198.2 672 201.5 675.3 206.5C679 212.5 682 219 684 225.8C677.5 223.5 671.5 218 667 211.5C663.5 206.5 661.5 202 664.2 200.2Z" fill="#2f1b2b"/>
<path d="M691 230.5C697 223.5 706 217.5 713.5 214.3C719 212 724.5 212 725.3 215.3C726 218.5 721.5 223 715 226.3C707.5 230 698.5 232 691 230.5Z" fill="#2f1b2b"/>
<path d="M630 253.5L651.4 254.5L674 264L690 266L690 300C684 304 686 318 697.4 330L662.9 392L647 332.5L656.3 328.5L656.3 316L653 316C641 316.5 630.5 306 630 295Z" fill="#f0a07f"/>
<circle cx="686.7" cy="274.7" r="10.8" fill="#f0a07f"/>
<path d="M683 279.5C684.5 276.5 687.5 274.5 690 274" stroke="#a5563a" stroke-width="1.8" fill="none" stroke-linecap="round"/>
<path d="M674 264L678.5 263C690 262 697.5 268 697.5 276C697.5 283 693 287 689 288L688.5 300L712 300L709.3 256L690 240Z" fill="#a5563a"/>
<path d="M678 263.5C686 261 697.5 266 697.5 275.5C697.5 282 693.5 286 689.5 286.5C684 286.5 679 283 677 277Z" fill="#f0a07f"/>
<path d="M682.5 280C684 277 687 275 690 274.3" stroke="#a5563a" stroke-width="1.8" fill="none" stroke-linecap="round"/>
<path d="M653 316C658.5 316 663.5 314 667 311.5" stroke="#c9764f" stroke-width="2" fill="none" stroke-linecap="round"/>
<path d="M651.4 254.3C656 252.5 660 250 662.5 247.3" stroke="#f0a07f" stroke-width="2" fill="none" stroke-linecap="round"/>
<path d="M709.5 280.5L708.5 290.5" stroke="#2f1b2b" stroke-width="2.3" stroke-linecap="round"/>
<circle cx="681.4" cy="292.3" r="7.8" fill="#fbeedd"/>
<circle cx="632.8" cy="272.8" r="11" fill="none" stroke="#2f1b2b" stroke-width="2.4"/>
<circle cx="661.2" cy="276.7" r="11.2" fill="none" stroke="#2f1b2b" stroke-width="2.4"/>
<path d="M643.8 273.6C646 272.6 648 273 650 274.5" stroke="#2f1b2b" stroke-width="2.2" fill="none"/>
<circle cx="638.7" cy="273.7" r="2" fill="#2f1b2b"/><circle cx="656.9" cy="277.1" r="2" fill="#2f1b2b"/>
<path d="M645.5 281.5C643.5 284 643.5 287 646 288" stroke="#a5563a" stroke-width="1.7" fill="none" stroke-linecap="round"/>
<path d="M644.5 295.3C647 297.2 650.5 296.5 652.5 293.8" stroke="#a5563a" stroke-width="1.9" fill="none" stroke-linecap="round"/>
<path d="M627.4 333C610 345 586 369 569 390L555 480L740 480L749.5 477.3C757 479 765 480.5 773 480.5C783 480.5 792 478 797.5 472.5C802 462 805 451 804.8 439C804.5 424 801.5 413 797.7 405C791.5 391 784 379 775 370C760 354 742 339 725.3 331L697.4 330L662.9 392L647 332Z" fill="#4355e9"/>
<path d="M624.9 417.3L632.9 441L622.5 471.8L612 471.8L606 437.1Z" fill="#dbeafe"/>
<path d="M734.4 412.9L744.1 424.4L733 423.5Z" fill="#dbeafe"/>
<path d="M627.4 333L637.4 355.5L627.4 357L665.5 413.5L668.3 427M662.6 392L665.5 407.5M725.3 331L709.7 354L723.9 354.6L667.3 403.3M720.5 394.3L734.2 412.6M617.1 398L623 416.5M632.8 439.9H644" stroke="#2f1b2b" stroke-width="2.3" fill="none" stroke-linejoin="miter" stroke-linecap="round"/>
<path d="M721.5 422.6L694.7 422.6C689 422.8 685 423.8 681.7 424.9C676 426 671 427.5 667 429L648.5 436.9C644 439 640.5 441 640.2 443.3C640 445.5 641 446.8 643 447.3C647 448 652 447 655.9 445.7C651 451 647 456 644.8 461.4C644 463.5 644.5 465.3 646.2 466C647.3 467 648.6 467.6 649.9 467.8C649.5 469 650 471.5 652.2 473.4C654 474.8 656 475.2 657.7 474.8C659 475.5 660 475.6 661.4 475.2C663 476.5 665 476.6 667 476.1C670 475.6 672.5 474.6 674.3 473.4C677 472 679.5 470.5 681.7 468.8L692.8 460.4C696 460 700 460.2 703.9 460C707 459.8 710 459 713.2 459C715 459.5 716.5 460.3 717.8 461.4L721.5 464.1Z" fill="#f0a07f"/>
<path d="M675.3 431.3C669 436 663 441 657.7 445.7M681.3 440.6C670 449 659 458 649.9 466M687.3 450.3C677 458 668 466 660.5 472.9" stroke="#a5563a" stroke-width="1.9" fill="none" stroke-linecap="round"/>
<path d="M720.5 464.6C730 469.5 740 474 749.2 476.6" stroke="#2f1b2b" stroke-width="2.3" fill="none" stroke-linecap="round"/>
<clipPath id="pc"><path d="M577 496C555 500 540 508 531.4 515.2C520 525 512 535 507.8 546.7C500 570 493 590 487.3 609.8L469.9 663.3L539.3 694.2C546 681 551 672 553.5 666.5C558 650 560 630 561.3 616L564.5 594L566 616C568 640 572 655 574 666.5L575.5 695.5L654.3 695.5L655.9 666.5C656 655 654 645 651.2 635C647 620 641 607 635.4 594L760 594L760 496Z"/></clipPath>
<path d="M577 496C555 500 540 508 531.4 515.2C520 525 512 535 507.8 546.7C500 570 493 590 487.3 609.8L469.9 663.3L539.3 694.2C546 681 551 672 553.5 666.5C558 650 560 630 561.3 616L564.5 594L566 616C568 640 572 655 574 666.5L575.5 695.5L654.3 695.5L655.9 666.5C656 655 654 645 651.2 635C647 620 641 607 635.4 594L760 594L760 496Z" fill="#ff7133"/>
<g clip-path="url(#pc)"><path d="M558.2 493.6L558.3 509.8L573.3 516.0L557.9 521.1L556.6 537.3L547.0 524.3L531.2 528.1L540.6 514.9L532.2 501.0L547.6 505.9ZM545.9 548.7L549.7 565.9L567.0 569.2L551.8 578.1L554.1 595.6L540.9 583.9L525.0 591.5L532.1 575.3L519.9 562.5L537.5 564.2ZM578.4 520.1L587.5 534.4L604.2 531.6L593.4 544.7L601.2 559.7L585.5 553.5L573.6 565.5L574.7 548.6L559.5 541.1L575.9 536.9ZM653.6 526.6L656.4 545.4L674.9 550.2L657.8 558.7L659.0 577.7L645.6 564.1L627.9 571.1L636.7 554.2L624.6 539.5L643.4 542.6ZM601.4 591.1L606.1 608.1L623.6 610.4L608.9 620.1L612.1 637.4L598.3 626.5L582.8 634.9L589.0 618.4L576.2 606.2L593.8 607.0ZM543.7 622.2L545.2 638.3L560.7 643.2L545.8 649.7L545.9 665.9L535.2 653.7L519.8 658.9L528.1 644.9L518.4 631.9L534.2 635.4ZM476.6 633.2L486.6 645.0L501.4 640.4L493.3 653.6L502.3 666.2L487.3 662.6L478.0 675.0L476.8 659.6L462.1 654.7L476.4 648.7ZM499.5 581.0L497.8 591.4L506.7 597.1L496.2 598.7L493.6 608.9L488.9 599.5L478.3 600.1L485.8 592.7L482.0 582.9L491.3 587.7ZM591.1 656.1L589.9 671.5L603.6 678.7L588.6 682.3L586.0 697.6L577.9 684.4L562.6 686.7L572.6 674.9L565.7 661.0L580.0 666.9ZM637.1 640.3L648.2 651.1L662.5 645.2L655.6 659.1L665.6 670.9L650.3 668.6L642.2 681.8L639.6 666.5L624.6 662.9L638.3 655.7ZM629.0 495.3L632.0 503.2L640.4 503.6L633.8 508.9L636.1 517.0L629.0 512.3L621.9 517.0L624.2 508.9L617.6 503.6L626.0 503.2ZM708.6 480.0L715.1 499.4L735.5 501.0L719.0 513.2L723.8 533.0L707.2 521.2L689.7 531.9L695.9 512.4L680.3 499.1L700.8 498.9ZM648.2 490.6L648.3 497.7L654.8 500.3L648.1 502.6L647.6 509.6L643.4 503.9L636.5 505.6L640.6 499.9L636.9 493.8L643.6 496.0ZM738.5 540.3L741.0 554.2L754.8 557.2L742.4 563.9L743.8 578.0L733.5 568.3L720.6 573.9L726.7 561.2L717.3 550.6L731.3 552.5Z" fill="#ffb1d3"/></g>
<path d="M646.4 498C610 503 584 512 575.5 524.7C567 537 564.5 550 564.5 562.5L564.5 595.6" stroke="#a5563a" stroke-width="2.4" fill="none" stroke-linecap="round"/>
<path d="M616.5 593.4H636" stroke="#a5563a" stroke-width="2.2"/>
<rect x="635.4" y="594.3" width="43" height="7.7" fill="#ffb1d3"/>
<rect x="671.5" y="705" width="106" height="12" fill="#fdbe24"/>
<path d="M684.2 598L701.5 598L670 759.5A5.9 5.9 0 0 1 658.3 757.5Z" fill="#fdbe24"/>
<path d="M753.5 598L770.9 598L797 758A5.9 5.9 0 0 1 785.3 760Z" fill="#fdbe24"/>
<path d="M734.6 529.4L804 529.4C801 545 798 559 794.5 569C791 580 787 588 782 594C778 599 773 602 766 602L677.2 602C677.5 590 680 578 686 568C694 553 712 530 734.6 529.4Z" fill="#ffb1d3"/>
<path d="M677.6 592.5L678.8 602" stroke="#a5563a" stroke-width="1.6"/>
<path d="M471.5 663.5C468 680 458 697 441.4 702.3L431 704L431 722L490 754L526.8 689.8Z" fill="#f0a07f"/>
<path d="M575.5 695L640.3 695L637.5 758.5L560 758.5C568 745 573 725 575.5 695Z" fill="#f0a07f"/>
<path d="M402.5 719.6C404.5 714.5 410.5 708.5 417.5 705.3C422 703.6 427 703.2 431.4 703.5L432.4 710.6L431.5 726L416 729Z" fill="#2f1b2b"/>
<path d="M409 721L489.2 757.8" stroke="#2f1b2b" stroke-width="7.8" stroke-linecap="round"/>
<path d="M431.5 703L440.6 689" stroke="#2f1b2b" stroke-width="6.2" stroke-linecap="round"/>
<path d="M431.8 713.8L438 713.3" stroke="#2f1b2b" stroke-width="5" stroke-linecap="round"/>
<path d="M438 713.3L454.7 713" stroke="#2f1b2b" stroke-width="8.6" stroke-linecap="round"/>
<path d="M538.3 766C538.3 750 548 740 558 739C563 745 567 752 569.2 758L633.5 758A4.2 4.2 0 0 1 633.5 766.4Z" fill="#2f1b2b"/>
<path d="M559 741L561.5 721.5" stroke="#2f1b2b" stroke-width="8" stroke-linecap="round"/>
<path d="M566 748L584 737" stroke="#2f1b2b" stroke-width="9" stroke-linecap="round"/>
<path d="M767.7 583C774 583 785 590 791.4 597.2C799 606 804 617 806 627L787 638C785 630 782 622 778.8 616.1C775 606 770 596 766 588C765 585 766 583 767.7 583Z" fill="#2f1b2b"/>
<path d="M786.6 636.6C795 628 809 624.5 823 625C838 625 853 629 866.5 639.2L912.9 697.1L931.5 720.8C937 718.5 943 717.5 948 717.7C953 717 958 718 962.5 719.8C969 724 974 730 979 735.3C986 737 993 737.5 999.7 738C1004 738 1008 740 1009 742.5C1010 745 1010 748 1009 749.7C1014 750 1019 750.5 1023.4 751.2C1029 753 1033 756 1033.8 759L1034 765.8L882 765.8C875 762 871 757 869.6 752.8L868.5 742.5C864 743.5 860 743.5 857.2 742.5C848 740 839 735 832.4 727C826 738 821 748 818.2 758L818.2 765.8L786.6 765.8C783 748 778 728 775.6 710.8C773 695 770 680 770.9 666.6C772 654 778 643 786.6 636.6Z" fill="#a5563a"/>
<path d="M860.5 637C856.5 638.5 855.5 643.5 857 648.5C858.5 653 863.5 656.5 864.5 662C862.5 668 862.8 674 864.4 679.5C867 690 872.5 697 880 700C886 702.5 893 703.3 898.5 702.5C904 701.5 909 699.5 913.2 697.3Z" fill="#f0a07f"/>
<circle cx="800.2" cy="672" r="10.7" fill="#f0a07f"/>
<path d="M932.6 721.9L948.5 718.1C947 729 944 740 940.8 749.7C936 757 930 762 923.3 765.5L894.8 765.8C896 760 899 756 902.6 752.8C909 749 914 745 919.1 740.4C924 735 929 728 932.6 721.9Z" fill="#2f1b2b"/>
<path d="M923.3 765.8C924 758 931 751.8 939.8 751.8C947 752 953 758 953.2 765.8Z" fill="#a5563a"/>
<path d="M931.5 753.5C939 750 950 753 953 765" stroke="#2f1b2b" stroke-width="2" fill="none"/>
<path d="M938.8 759V765.8M946 759V765.8M1019.3 759V765.8M1026.5 759V765.8M802.4 757V765.8M809.7 757V765.8" stroke="#2f1b2b" stroke-width="2"/>
<circle cx="965.2" cy="738.8" r="2.8" fill="#2f1b2b"/>
<ellipse cx="1004.8" cy="742.3" rx="5" ry="4.6" transform="rotate(25 1004.8 742.3)" fill="#2f1b2b"/>
<path d="M1009 750.8C1007 756 1002 760 997.6 761.3C992 763.5 986 765 980 765.4" stroke="#2f1b2b" stroke-width="2.4" fill="none" stroke-linecap="round"/>
<path d="M837.6 651.2C846 660 852 672 852 686.7C851 704 842 718 832.4 729M865 716C865 726 866 735 867.9 743.5" stroke="#2f1b2b" stroke-width="2.3" fill="none" stroke-linecap="round"/>
<rect x="392" y="480" width="502" height="16.5" fill="#fdbe24"/>
<path d="M398.5 368.5L518.5 268" stroke="#37b6f1" stroke-width="11.5" stroke-linecap="round"/>
<rect x="444" y="325" width="12" height="137" fill="#37b6f1"/>
<circle cx="449.8" cy="325.2" r="15.3" fill="#4355e9"/><circle cx="449.8" cy="325.2" r="6.2" fill="#37b6f1"/>
<path d="M442.7 459.5H457" stroke="#4355e9" stroke-width="2.5"/>
<path d="M416 480V474C416 466 432 461 449.5 461C467 461 483 466 483 474V480Z" fill="#37b6f1"/>
<path d="M416.3 472.4H482.7" stroke="#4355e9" stroke-width="2.5"/>
<path d="M512 242.200L514.500 246" stroke="#4355e9" stroke-width="6.600" stroke-linecap="round"/>
<clipPath id="bc"><circle cx="564.1" cy="303.5" r="9.5"/></clipPath><circle cx="564.1" cy="303.5" r="9.5" fill="#ffb1d3"/><path d="M529.9 326.3L590.8 274.7" stroke="#b4644a" stroke-width="5.2" clip-path="url(#bc)"/>
<path d="M511.4 254.6C510.5 249 515 244.5 521.7 244.2C526 244.2 529.5 246.5 531.5 249.1C534 252.5 535.5 255 538 256.7C540.5 258.3 543 259 545.7 259.5C552 260.5 558.5 261 565.2 261.6C570.5 262.5 575.5 263.8 580.4 265.4L590.8 274.7L529.9 326.3L522.8 313.3C521.8 309 521.3 304.5 521.2 300.2C521.2 293 522.5 285.5 522.8 278.5C522.6 276 521.8 273.8 520.7 272L514.1 263.3C512.5 260.5 511.8 257.5 511.4 254.6Z" fill="#37b6f1"/>
<path d="M522.8 313.3L580.4 265.8M514.7 264.3L520.7 272.5" stroke="#4355e9" stroke-width="2.5" stroke-linecap="round"/>
<path d="M493 391.3L590 391.3Q597.5 391.3 600 398.3L622.3 471.8L685.500 471.8Q690 471.8 690 475.800L690 479.8L505.600 479.8L482.600 405.500Q478.500 391.800 493 391.3Z" fill="#2f1b2b"/>
<path d="M529.6 429C530 426.5 534 426 537 428L546.7 434.5C549 431 553 427.5 557 427C560 426.8 561.5 429 560.9 432C559 439 555 446 551.5 451.5C549 448 540 440 532 433C530 431.5 529.3 430.2 529.6 429Z" fill="#a5563a"/>
<path d="M541.3 418.3C544 420.500 546.3 425.500 546.7 430.500C543.700 429 541 423.500 541.3 418.3Z" fill="#a5563a"/>
<path d="M476 424L500 420L514 456L497 462L484 450Z" fill="#f0a07f"/>
<ellipse cx="489" cy="425.8" rx="16" ry="9.8" transform="rotate(-20 489 425.8)" fill="#f0a07f"/>
<path d="M487.5 440.8L505.5 432.8" stroke="#f0a07f" stroke-width="12.6" stroke-linecap="round"/>
<path d="M492.5 450.6L510 443.6" stroke="#f0a07f" stroke-width="11.4" stroke-linecap="round"/>
<path d="M498 458.6L512 454" stroke="#f0a07f" stroke-width="9.6" stroke-linecap="round"/>
<path d="M479.2 437.4C488 436 497 431 503.7 425.1M483.1 447.6C493 446 503 441 511 434.9M491.4 456C499 455 507 452 513 448.1" stroke="#a5563a" stroke-width="2" fill="none" stroke-linecap="round"/>
<ellipse cx="838.5" cy="451.2" rx="10.2" ry="6.6" fill="none" stroke="#37b6f1" stroke-width="5"/>
<path d="M786.3 423.9L841.8 423.9L829.8 480L798 480Z" fill="#37b6f1"/>
<path d="M786.3 423.9L841.8 423.9C836 433 825 438.7 813.3 438.7C802 438.7 791.5 433 786.3 423.9Z" fill="#2f1b2b"/>
</g>
</svg><!--/ART--></div>
<div class="abs" style="left:257px;top:854px;width:804px;height:16px;background:#2b2b2b"></div>
<div class="abs" style="left:567px;top:858px;width:190px;height:8px;border-radius:4px;background:#6c6c6c"></div>
<div class="abs" style="left:1061px;top:68px;width:12px;height:802px;background:#2b2b2b"></div>
<div class="abs" style="left:1062px;top:280px;width:8px;height:367px;border-radius:4px;background:#5c5c5c"></div>
<div class="abs" style="left:248px;top:72px;width:1px;height:824px;background:#7c7c7c"></div>
<div class="abs" style="left:1073px;top:72px;width:1px;height:824px;background:#7c7c7c"></div>
<div class="abs" style="left:247px;top:442px;width:8px;height:80px;background:#aaaaae"></div>
<svg class="ic" style="left:247px;top:476px" width="8" height="12"><path d="M6.5 1.5v9L1.5 6z" fill="#1a1a1a"/></svg>
<div class="abs" style="left:1073px;top:442px;width:8px;height:80px;background:#aaaaae"></div>
<svg class="ic" style="left:1073px;top:476px" width="8" height="12"><path d="M1.5 1.5v9L6.5 6z" fill="#1a1a1a"/></svg>
<svg class="ic" style="left:270px;top:874px" width="92" height="18"><g fill="#a9a7b2"><path d="M3 1.5h1.6v15H3zM13 1.8v14.4L5 9z"/><path d="M37 1.8v14.4L29 9z"/><path d="M53.5 1.8v14.4l8-7.2z"/><path d="M78.5 1.8v14.4l8-7.2zM86.9 1.5h1.6v15h-1.6z"/></g></svg>
<div class="abs" style="left:389px;top:874px;font-size:15.7px;font-weight:bold;color:#fff">Layout</div>
<div class="abs" style="left:374px;top:893px;width:84px;height:3px;background:#9b9b9b"></div>
<div class="abs" style="left:475px;top:874px;font-size:15.5px;color:#f4f4f4">Controls</div>
<div class="sep" style="left:549px;top:876px;height:14px;background:#4a4a4a"></div>
<div class="abs" style="left:571px;top:874px;font-size:15.5px;color:#f4f4f4">Dimension Lines</div>
<div class="sep" style="left:704px;top:876px;height:14px;background:#4a4a4a"></div><!--/WK--></div>

<!-- PROPERTIES -->
<div id="props"><!--PR--><svg class="ic" style="left:1083px;top:77px" width="5" height="18"><g fill="#e2e2e2"><circle cx="2.2" cy="2.2" r="1.4"/><circle cx="2.2" cy="6.5" r="1.4"/><circle cx="2.2" cy="10.8" r="1.4"/><circle cx="2.2" cy="15.1" r="1.4"/></g></svg>
<div class="abs" style="left:1094px;top:77px;font-size:15.3px;font-weight:bold;color:#fff">Properties</div>
<svg class="ic" style="left:1427px;top:80px" width="10" height="10"><path d="M1.5 1.5L8.5 8.5M8.5 1.5L1.5 8.5" stroke="#343434" stroke-width="1.3"/></svg>
<svg class="ic" style="left:1454px;top:78px" width="12" height="11"><path d="M0 1.5H11.5M0 5.5H11.5M0 9.5H11.5" stroke="#d6d6d6" stroke-width="1.4"/></svg>
<div class="hd" style="top:103px"><svg class="ic" style="left:11px;top:9.5px" width="11" height="11"><path d="M2.5 1L7 5.5L2.5 10" fill="none" stroke="#8d8d8d" stroke-width="1.6"/></svg><b>Character</b><i></i></div>
<div class="hd" style="top:135.4px"><svg class="ic" style="left:11px;top:9.5px" width="11" height="11"><path d="M2.5 1L7 5.5L2.5 10" fill="none" stroke="#8d8d8d" stroke-width="1.6"/></svg><b>Paragraph</b><i></i></div>
<div class="hd" style="top:167.8px"><svg class="ic" style="left:9.5px;top:11.5px" width="11" height="11"><path d="M1 2.5L5.5 6.5L10 2.5" fill="none" stroke="#8d8d8d" stroke-width="1.6"/></svg><b>Area</b><i></i></div>
<div class="hd" style="top:347px"><svg class="ic" style="left:11px;top:9.5px" width="11" height="11"><path d="M2.5 1L7 5.5L2.5 10" fill="none" stroke="#8d8d8d" stroke-width="1.6"/></svg><b>Line</b><i></i></div>
<div class="hd" style="top:379.3px"><svg class="ic" style="left:11px;top:9.5px" width="11" height="11"><path d="M2.5 1L7 5.5L2.5 10" fill="none" stroke="#8d8d8d" stroke-width="1.6"/></svg><b>Effect</b></div>
<div class="hd" style="top:411.7px"><svg class="ic" style="left:11px;top:9.5px" width="11" height="11"><path d="M2.5 1L7 5.5L2.5 10" fill="none" stroke="#8d8d8d" stroke-width="1.6"/></svg><b>Shadow</b><i></i></div>
<div class="hd" style="top:444.2px"><svg class="ic" style="left:9.5px;top:11.5px" width="11" height="11"><path d="M1 2.5L5.5 6.5L10 2.5" fill="none" stroke="#8d8d8d" stroke-width="1.6"/></svg><b>Position and Size</b><i></i></div>
<div class="hd" style="top:796.8px"><svg class="ic" style="left:11px;top:9.5px" width="11" height="11"><path d="M2.5 1L7 5.5L2.5 10" fill="none" stroke="#8d8d8d" stroke-width="1.6"/></svg><b>Columns</b></div>
<div class="lbl" style="left:1089.7px;top:212px">Fill:</div>
<div class="lbl" style="left:1089.7px;top:281px">Transparency:</div>
<div class="lbl" style="left:1089.7px;top:489.5px">Position X:</div>
<div class="lbl" style="left:1089.7px;top:524px">Position Y:</div>
<div class="lbl" style="left:1089.7px;top:559px">Width:</div>
<div class="lbl" style="left:1089.7px;top:593.5px">Height:</div>
<div class="lbl" style="left:1227.5px;top:625px">Keep ratio</div>
<div class="lbl" style="left:1089.7px;top:656px">Rotation:</div>
<div class="lbl" style="left:1089.7px;top:692.5px">Flip:</div>
<div class="lbl" style="left:1089.7px;top:727px">Arrange:</div>
<div class="lbl" style="left:1089.7px;top:762px">Align:</div>
<div class="sel" style="top:209px">Color</div>
<svg class="ic" style="left:1399px;top:212.5px" width="10" height="15" viewBox="0 0 10 15"><path d="M1.8 6L5 2.8L8.2 6M1.8 9.5L5 12.7L8.2 9.5" fill="none" stroke="#fff" stroke-width="1.7" stroke-linecap="round" stroke-linejoin="round"/></svg>
<div class="sel" style="top:277px">None</div>
<svg class="ic" style="left:1399px;top:280.5px" width="10" height="15" viewBox="0 0 10 15"><path d="M1.8 6L5 2.8L8.2 6M1.8 9.5L5 12.7L8.2 9.5" fill="none" stroke="#fff" stroke-width="1.7" stroke-linecap="round" stroke-linejoin="round"/></svg>
<svg class="ic" style="left:1200px;top:245px" width="17" height="17" viewBox="0 0 17 17"><path d="M2 6.5V11" stroke="#3f7fd0" stroke-width="2"/><path d="M1.5 6Q4.5 4 7 6" stroke="#3f7fd0" stroke-width="1.7" fill="none"/><path d="M5.5 6.5L11 2.8L15.5 9.5L10 13.2Z" fill="#55555b" stroke="#d4d4d8" stroke-width="1.2" stroke-linejoin="round"/><path d="M9.5 2Q11.5 0 13 2L13.3 5" fill="none" stroke="#d4d4d8" stroke-width="1.1"/><circle cx="10" cy="7.5" r="1.2" fill="#262626" stroke="#d4d4d8" stroke-width=".8"/></svg>
<div class="abs" style="left:1218.5px;top:248px;width:66px;height:13.5px;background:#d9e8fd;box-shadow:0 0 0 1px #1d2530"></div>
<div class="dd" style="left:1292px;top:255px"></div>
<div class="abs" style="left:1104px;top:323.5px;width:198px;height:4px;border-radius:2px;background:#3c3c3c"></div>
<div class="abs" style="left:1091.5px;top:314.5px;width:22px;height:22px;border-radius:50%;background:#9e9e9e"></div>
<div class="fld" style="left:1317px;top:312.5px;width:73px;height:21px"></div>
<div class="lbl" style="left:1321px;top:314px">0%</div>
<svg class="ic" style="left:1395.5px;top:312px" width="14" height="22" viewBox="0 0 14 22"><rect x="0" y="0" width="14" height="22" rx="4.5" fill="#a6a6a6"/><path d="M.500 11H13.5" stroke="#8a8a8a" stroke-width="1"/><path d="M3.8 7.3L7 4.3L10.2 7.3M3.8 14.7L7 17.7L10.2 14.7" fill="none" stroke="#ffffff" stroke-width="1.6" stroke-linecap="round" stroke-linejoin="round"/></svg>
<div class="fld" style="left:1202px;top:487.5px;width:188px;height:21px"></div>
<svg class="ic" style="left:1395.5px;top:486.5px" width="14" height="22" viewBox="0 0 14 22"><rect x="0" y="0" width="14" height="22" rx="4.5" fill="#a6a6a6"/><path d="M.500 11H13.5" stroke="#8a8a8a" stroke-width="1"/><path d="M3.8 7.3L7 4.3L10.2 7.3M3.8 14.7L7 17.7L10.2 14.7" fill="none" stroke="#ffffff" stroke-width="1.6" stroke-linecap="round" stroke-linejoin="round"/></svg>
<div class="fld" style="left:1202px;top:522px;width:188px;height:21px"></div>
<svg class="ic" style="left:1395.5px;top:521.5px" width="14" height="22" viewBox="0 0 14 22"><rect x="0" y="0" width="14" height="22" rx="4.5" fill="#a6a6a6"/><path d="M.500 11H13.5" stroke="#8a8a8a" stroke-width="1"/><path d="M3.8 7.3L7 4.3L10.2 7.3M3.8 14.7L7 17.7L10.2 14.7" fill="none" stroke="#ffffff" stroke-width="1.6" stroke-linecap="round" stroke-linejoin="round"/></svg>
<div class="fld" style="left:1202px;top:557px;width:188px;height:21px"></div>
<svg class="ic" style="left:1395.5px;top:556.5px" width="14" height="22" viewBox="0 0 14 22"><rect x="0" y="0" width="14" height="22" rx="4.5" fill="#6c6c6c"/><path d="M.500 11H13.5" stroke="#555" stroke-width="1"/><path d="M3.8 7.3L7 4.3L10.2 7.3M3.8 14.7L7 17.7L10.2 14.7" fill="none" stroke="#b9b9b9" stroke-width="1.6" stroke-linecap="round" stroke-linejoin="round"/></svg>
<div class="fld" style="left:1202px;top:591.5px;width:188px;height:21px"></div>
<svg class="ic" style="left:1395.5px;top:591px" width="14" height="22" viewBox="0 0 14 22"><rect x="0" y="0" width="14" height="22" rx="4.5" fill="#6c6c6c"/><path d="M.500 11H13.5" stroke="#555" stroke-width="1"/><path d="M3.8 7.3L7 4.3L10.2 7.3M3.8 14.7L7 17.7L10.2 14.7" fill="none" stroke="#b9b9b9" stroke-width="1.6" stroke-linecap="round" stroke-linejoin="round"/></svg>
<div class="abs" style="left:1202.5px;top:625.5px;width:15px;height:15px;border-radius:3.5px;background:#5b5b5b;box-shadow:0 .5px 0 rgba(255,255,255,.15) inset"></div>
<div class="fld" style="left:1260px;top:652.5px;width:130px;height:21px"></div>
<div class="lbl" style="left:1263.5px;top:655.5px">0&#46;00&#176;</div>
<svg class="ic" style="left:1395.5px;top:652px" width="14" height="22" viewBox="0 0 14 22"><rect x="0" y="0" width="14" height="22" rx="4.5" fill="#a6a6a6"/><path d="M.500 11H13.5" stroke="#8a8a8a" stroke-width="1"/><path d="M3.8 7.3L7 4.3L10.2 7.3M3.8 14.7L7 17.7L10.2 14.7" fill="none" stroke="#ffffff" stroke-width="1.6" stroke-linecap="round" stroke-linejoin="round"/></svg>
<svg class="ic" style="left:1195px;top:655px" width="52" height="52" viewBox="0 0 52 52"><defs><linearGradient id="dg" x1="0" y1="1" x2="1" y2="0"><stop offset="0" stop-color="#000"/><stop offset=".5" stop-color="#0c0c0c"/><stop offset=".72" stop-color="#3c3c3c"/><stop offset="1" stop-color="#6a6a6a"/></linearGradient></defs><circle cx="26" cy="26" r="21" fill="none" stroke="url(#dg)" stroke-width="9.5"/><path d="M41.5 26L51.5 26" stroke="#bdbdbd" stroke-width="1.3" opacity="0.95"/><path d="M42.9 21.5L50.6 19.4" stroke="#bdbdbd" stroke-width="1.1" opacity="0.5"/><path d="M41.2 17.2L48.1 13.3" stroke="#bdbdbd" stroke-width="1.1" opacity="0.5"/><path d="M38.4 13.6L44 8" stroke="#bdbdbd" stroke-width="1.1" opacity="0.5"/><path d="M34.8 10.8L38.8 3.9" stroke="#bdbdbd" stroke-width="1.1" opacity="0.5"/><path d="M30.5 9.1L32.6 1.4" stroke="#bdbdbd" stroke-width="1.1" opacity="0.5"/><path d="M26 10.5L26 0.5" stroke="#bdbdbd" stroke-width="1.3" opacity="0.95"/><path d="M21.5 9.1L19.4 1.4" stroke="#bdbdbd" stroke-width="1.1" opacity="0.5"/><path d="M17.3 10.8L13.3 3.9" stroke="#bdbdbd" stroke-width="1.1" opacity="0.5"/><path d="M13.6 13.6L8 8" stroke="#bdbdbd" stroke-width="1.1" opacity="0.5"/><path d="M10.8 17.2L3.9 13.3" stroke="#bdbdbd" stroke-width="1.1" opacity="0.5"/><path d="M9.1 21.5L1.4 19.4" stroke="#bdbdbd" stroke-width="1.1" opacity="0.5"/><path d="M10.5 26L0.5 26" stroke="#bdbdbd" stroke-width="1.3" opacity="0.95"/><path d="M9.1 30.5L1.4 32.6" stroke="#bdbdbd" stroke-width="1.1" opacity="0.5"/><path d="M10.8 34.8L3.9 38.8" stroke="#bdbdbd" stroke-width="1.1" opacity="0.5"/><path d="M13.6 38.4L8 44" stroke="#bdbdbd" stroke-width="1.1" opacity="0.5"/><path d="M17.2 41.2L13.2 48.1" stroke="#bdbdbd" stroke-width="1.1" opacity="0.5"/><path d="M21.5 42.9L19.4 50.6" stroke="#bdbdbd" stroke-width="1.1" opacity="0.5"/><path d="M26 41.5L26 51.5" stroke="#bdbdbd" stroke-width="1.3" opacity="0.95"/><path d="M30.5 42.9L32.6 50.6" stroke="#bdbdbd" stroke-width="1.1" opacity="0.5"/><path d="M34.8 41.2L38.8 48.1" stroke="#bdbdbd" stroke-width="1.1" opacity="0.5"/><path d="M38.4 38.4L44 44" stroke="#bdbdbd" stroke-width="1.1" opacity="0.5"/><path d="M41.2 34.8L48.1 38.8" stroke="#bdbdbd" stroke-width="1.1" opacity="0.5"/><path d="M42.9 30.5L50.6 32.6" stroke="#bdbdbd" stroke-width="1.1" opacity="0.5"/><path d="M26 26H44" stroke="#9a9a9a" stroke-width="1.3"/><circle cx="46.6" cy="26" r="3.4" fill="#3a78c2" stroke="#8fb6e6" stroke-width="1"/></svg>
<svg class="ic" style="left:1256px;top:689px" width="21" height="19" viewBox="0 0 21 19"><path d="M1.2 9.3L19.2 1V8.6Z" fill="#f2f2f2"/><path d="M1.8 10.2L19.2 10.8V17.8Z" fill="none" stroke="#e6e6e6" stroke-width="1.3" stroke-linejoin="round"/></svg>
<svg class="ic" style="left:1282px;top:688.5px" width="19" height="19" viewBox="0 0 19 19"><path d="M9.3 1.2L17.8 18H10.2Z" fill="#f2f2f2"/><path d="M8.3 2.5L8 18H1.2Z" fill="none" stroke="#e6e6e6" stroke-width="1.3" stroke-linejoin="round"/></svg>
<svg class="ic" style="left:1199.5px;top:725.5px" width="19" height="19" viewBox="0 0 19 19"><rect x="8.5" y=".8" width="9.5" height="8.5" fill="none" stroke="#d6d6d6" stroke-width="1.3"/><rect x=".8" y="9.5" width="9.5" height="8.5" fill="none" stroke="#d6d6d6" stroke-width="1.3"/><rect x="2.8" y="3.5" width="13.2" height="12" fill="#fdc41f"/></svg>
<svg class="ic" style="left:1224.5px;top:725.5px" width="19" height="19" viewBox="0 0 19 19"><rect x=".8" y="7.5" width="11" height="10.5" fill="none" stroke="#d6d6d6" stroke-width="1.3"/><rect x="6" y=".3" width="12.4" height="12" fill="#fdc41f"/></svg>
<svg class="ic" style="left:1249.5px;top:725.5px" width="19" height="19" viewBox="0 0 19 19"><rect x="5.5" y=".3" width="12.7" height="11.2" fill="#fdc41f"/><rect x=".8" y="6.5" width="11.5" height="11.5" fill="#2a2a2a" stroke="#d6d6d6" stroke-width="1.3"/></svg>
<svg class="ic" style="left:1275px;top:725.5px" width="19" height="19" viewBox="0 0 19 19"><rect x="2.5" y="3" width="13" height="12" fill="#fdc41f"/><rect x="7.5" y=".8" width="10" height="5.5" fill="#2a2a2a" stroke="#d6d6d6" stroke-width="1.3"/><rect x=".8" y="11.8" width="10.5" height="5.7" fill="#2a2a2a" stroke="#d6d6d6" stroke-width="1.3"/></svg>
<svg class="ic" style="left:1199.5px;top:760.5px" width="19" height="19" viewBox="0 0 19 19"><path d="M1.1 .3V18.3" stroke="#d6d6d6" stroke-width="1.3"/><rect x="2.8" y="1.8" width="15" height="5.8" fill="none" stroke="#d6d6d6" stroke-width="1.3"/><rect x="2.5" y="10.5" width="10.5" height="6.7" fill="#fdc41f"/></svg>
<svg class="ic" style="left:1225px;top:760.5px" width="19" height="19" viewBox="0 0 19 19"><rect x="3.8" y="1.8" width="9.5" height="5.8" fill="none" stroke="#d6d6d6" stroke-width="1.3"/><rect x="1" y="10.5" width="15.5" height="6.7" fill="#fdc41f"/><path d="M8.6 .3V18.3" stroke="#d6d6d6" stroke-width="1.3"/></svg>
<svg class="ic" style="left:1249.5px;top:760.5px" width="19" height="19" viewBox="0 0 19 19"><path d="M17.4 .3V18.3" stroke="#d6d6d6" stroke-width="1.3"/><rect x=".8" y="1.8" width="15" height="5.8" fill="none" stroke="#d6d6d6" stroke-width="1.3"/><rect x="5.5" y="10.5" width="10.5" height="6.7" fill="#fdc41f"/></svg>
<svg class="ic" style="left:1277.5px;top:760.5px" width="19" height="19" viewBox="0 0 19 19"><path d="M.5 .9H18.5" stroke="#d6d6d6" stroke-width="1.3"/><rect x="2" y="2.5" width="6" height="10" fill="#fdc41f"/><rect x="11" y="2.8" width="6" height="14.7" fill="none" stroke="#d6d6d6" stroke-width="1.3"/></svg>
<svg class="ic" style="left:1302.5px;top:760.5px" width="19" height="19" viewBox="0 0 19 19"><rect x="2" y="1.5" width="6.5" height="15.5" fill="#fdc41f"/><rect x="11" y="5" width="6" height="9" fill="none" stroke="#d6d6d6" stroke-width="1.3"/><path d="M.5 9.4H18.5" stroke="#d6d6d6" stroke-width="1.3"/></svg>
<svg class="ic" style="left:1327.5px;top:760.5px" width="19" height="19" viewBox="0 0 19 19"><path d="M.5 17.5H18.5" stroke="#d6d6d6" stroke-width="1.3"/><rect x="1.8" y="5.5" width="6.7" height="10.5" fill="#fdc41f"/><rect x="11" y="1" width="6" height="15" fill="none" stroke="#d6d6d6" stroke-width="1.3"/></svg>
<div class="abs" style="left:1428px;top:105.5px;width:8.5px;height:785px;border-radius:4.25px;background:#5d5d5d"></div>
<div class="selbox" style="left:1441.5px;top:98px;width:33.5px;height:34px;border-color:#c9c9c9"></div>
<svg class="ic" style="left:1447.5px;top:103.5px" width="22" height="24" viewBox="0 0 22 24"><rect x="1" y="1.5" width="20" height="20.5" fill="none" stroke="#cfcfcf" stroke-width="1.2"/><rect x="6" y="3.5" width="10" height="16.5" fill="none" stroke="#e6e6e6" stroke-width="1.4"/><rect x="9" y="7" width="4" height="7" fill="#8a8a8a"/></svg>
<svg class="ic" style="left:1446px;top:136px" width="28" height="28" viewBox="0 0 28 28"><path d="M3 18L9 2.5H11.5L17.5 18H15L13.5 14H7L5.5 18ZM8 11.5H12.5L10.2 5.5Z" fill="#efefef"/><path d="M26 6L24 4.5L14 14.5L16 16.5Z" fill="#d9d9d9"/><path d="M13 13L17 17L13 20.5L9.5 17.5Z" fill="#f08a24"/><path d="M6 21Q12 17.5 18 21.5Q12 25 6 21Z" fill="#3f8be8"/></svg>
<svg class="ic" style="left:1447px;top:171px" width="25" height="24" viewBox="0 0 25 24"><defs><linearGradient id="gg" x1="0" y1="0" x2="0" y2="1"><stop offset="0" stop-color="#d59ad0"/><stop offset=".55" stop-color="#f7a27c"/><stop offset="1" stop-color="#f6c08a"/></linearGradient></defs><rect x=".8" y=".8" width="23.4" height="22.4" fill="url(#gg)" stroke="#d0d0d0" stroke-width="1.5"/><path d="M2 17L6 14.5L9 15.5L12.5 13L17 15.5L20 14.5L23 16.5V19H2Z" fill="#2a1d26"/><rect x="1.6" y="19" width="21.8" height="3.4" fill="#e79ac0"/></svg>
<svg class="ic" style="left:1448px;top:203.5px" width="24" height="24" viewBox="0 0 24 24"><circle cx="12" cy="12" r="11" fill="#3f97f2"/><path d="M18.5 5.5L13.5 13.5L10.5 10.5Z" fill="#f0565b"/><path d="M5.5 18.5L10.5 10.5L13.5 13.5Z" fill="#dfe6ee"/></svg>
<svg class="ic" style="left:1447px;top:236.5px" width="26" height="26" viewBox="0 0 26 26"><path d="M13 2L24 13L13 24L2 13Z" fill="none" stroke="#2b5fa3" stroke-width="1.7"/></svg><!--/PR--></div>

<!-- STATUS BAR -->
<div id="status"><!--ST--><div class="abs" style="left:0;top:896px;width:1480px;height:1px;background:#686868"></div>
<div class="st" style="left:12px;top:901px">Page 1 of 1 (Layout)</div>
<div class="sep" style="left:157px;top:900px;height:20px;background:#4e4e4e"></div>
<div class="st" style="left:168px;top:901px">Shape selected</div>
<div class="sep" style="left:571px;top:900px;height:20px;background:#4e4e4e"></div>
<div class="st" style="left:582.5px;top:901px">Default</div>
<div class="sep" style="left:755px;top:900px;height:20px;background:#4e4e4e"></div>
<svg class="ic" style="left:766px;top:901px" width="17" height="14"><path d="M1 3.5H5M3 1.5V5.5" stroke="#5b9bf0" stroke-width="1.3"/><rect x="4.5" y="5" width="10.5" height="6.5" fill="none" stroke="#d8d8d8" stroke-width="1.4"/></svg>
<div class="st" style="left:789.5px;top:902px">-0.39 / -0.39</div>
<svg class="ic" style="left:955px;top:900px" width="21" height="16"><path d="M3 4H19M3 2V6M19 2V6" stroke="#5b9bf0" stroke-width="1.3"/><path d="M2 7V15M.500 8.5H3.5M.500 13.5H3.5" stroke="#5b9bf0" stroke-width="1.2"/><rect x="6" y="7.5" width="12" height="6.5" fill="none" stroke="#d8d8d8" stroke-width="1.4"/></svg>
<div class="st" style="left:979px;top:902px">11.14 x 8.27</div>
<div class="sep" style="left:1142px;top:900px;height:20px;background:#4e4e4e"></div>
<div class="st" style="left:1153.5px;top:901px">1:1</div>
<svg class="ic" style="left:1185px;top:900px" width="21" height="19"><path d="M1.5 1.5H16L19 4.5V17.5H1.5Z" fill="#3a1a1c" stroke="#e0575c" stroke-width="1.8" stroke-linejoin="round"/><rect x="5" y="1.5" width="10" height="5.5" fill="none" stroke="#e0575c" stroke-width="1.6"/><rect x="5" y="11" width="10.5" height="6.5" fill="none" stroke="#e0575c" stroke-width="1.6"/></svg>
<div class="sep" style="left:1237px;top:900px;height:20px;background:#4e4e4e"></div>
<svg class="ic" style="left:1242px;top:901px" width="16" height="16"><path d="M8 1.5V14.5M1.5 8H14.5" stroke="#e6e6e6" stroke-width="1.3"/><path d="M8 0L10.5 3H5.5ZM8 16L10.5 13H5.5ZM0 8L3 5.5V10.5ZM16 8L13 5.5V10.5Z" fill="#e6e6e6"/><rect x="6.3" y="6.3" width="3.4" height="3.4" fill="#262626" stroke="#e6e6e6" stroke-width="1"/></svg>
<div class="sep" style="left:1262px;top:900px;height:20px;background:#4e4e4e"></div>
<svg class="ic" style="left:1268px;top:899px" width="150" height="21"><g fill="none" stroke="#dcdcdc" stroke-width="1.3"><circle cx="9.5" cy="11" r="7.3"/><path d="M5.5 11H13.5"/><path d="M18.5 11H128.5"/><path d="M72 7.5V14.5"/><circle cx="138" cy="11" r="7.3"/><path d="M134 11H142M138 7V15"/></g><path d="M51.5 4.5H62.5V12.5L57 18L51.5 12.5Z" fill="#262626" stroke="#e6e6e6" stroke-width="1.4" stroke-linejoin="round"/></svg>
<div class="sep" style="left:1418px;top:900px;height:20px;background:#4e4e4e"></div>
<div class="st" style="left:1428px;top:901px">70%</div><!--/ST--></div>

</div>
</body>
</html>
